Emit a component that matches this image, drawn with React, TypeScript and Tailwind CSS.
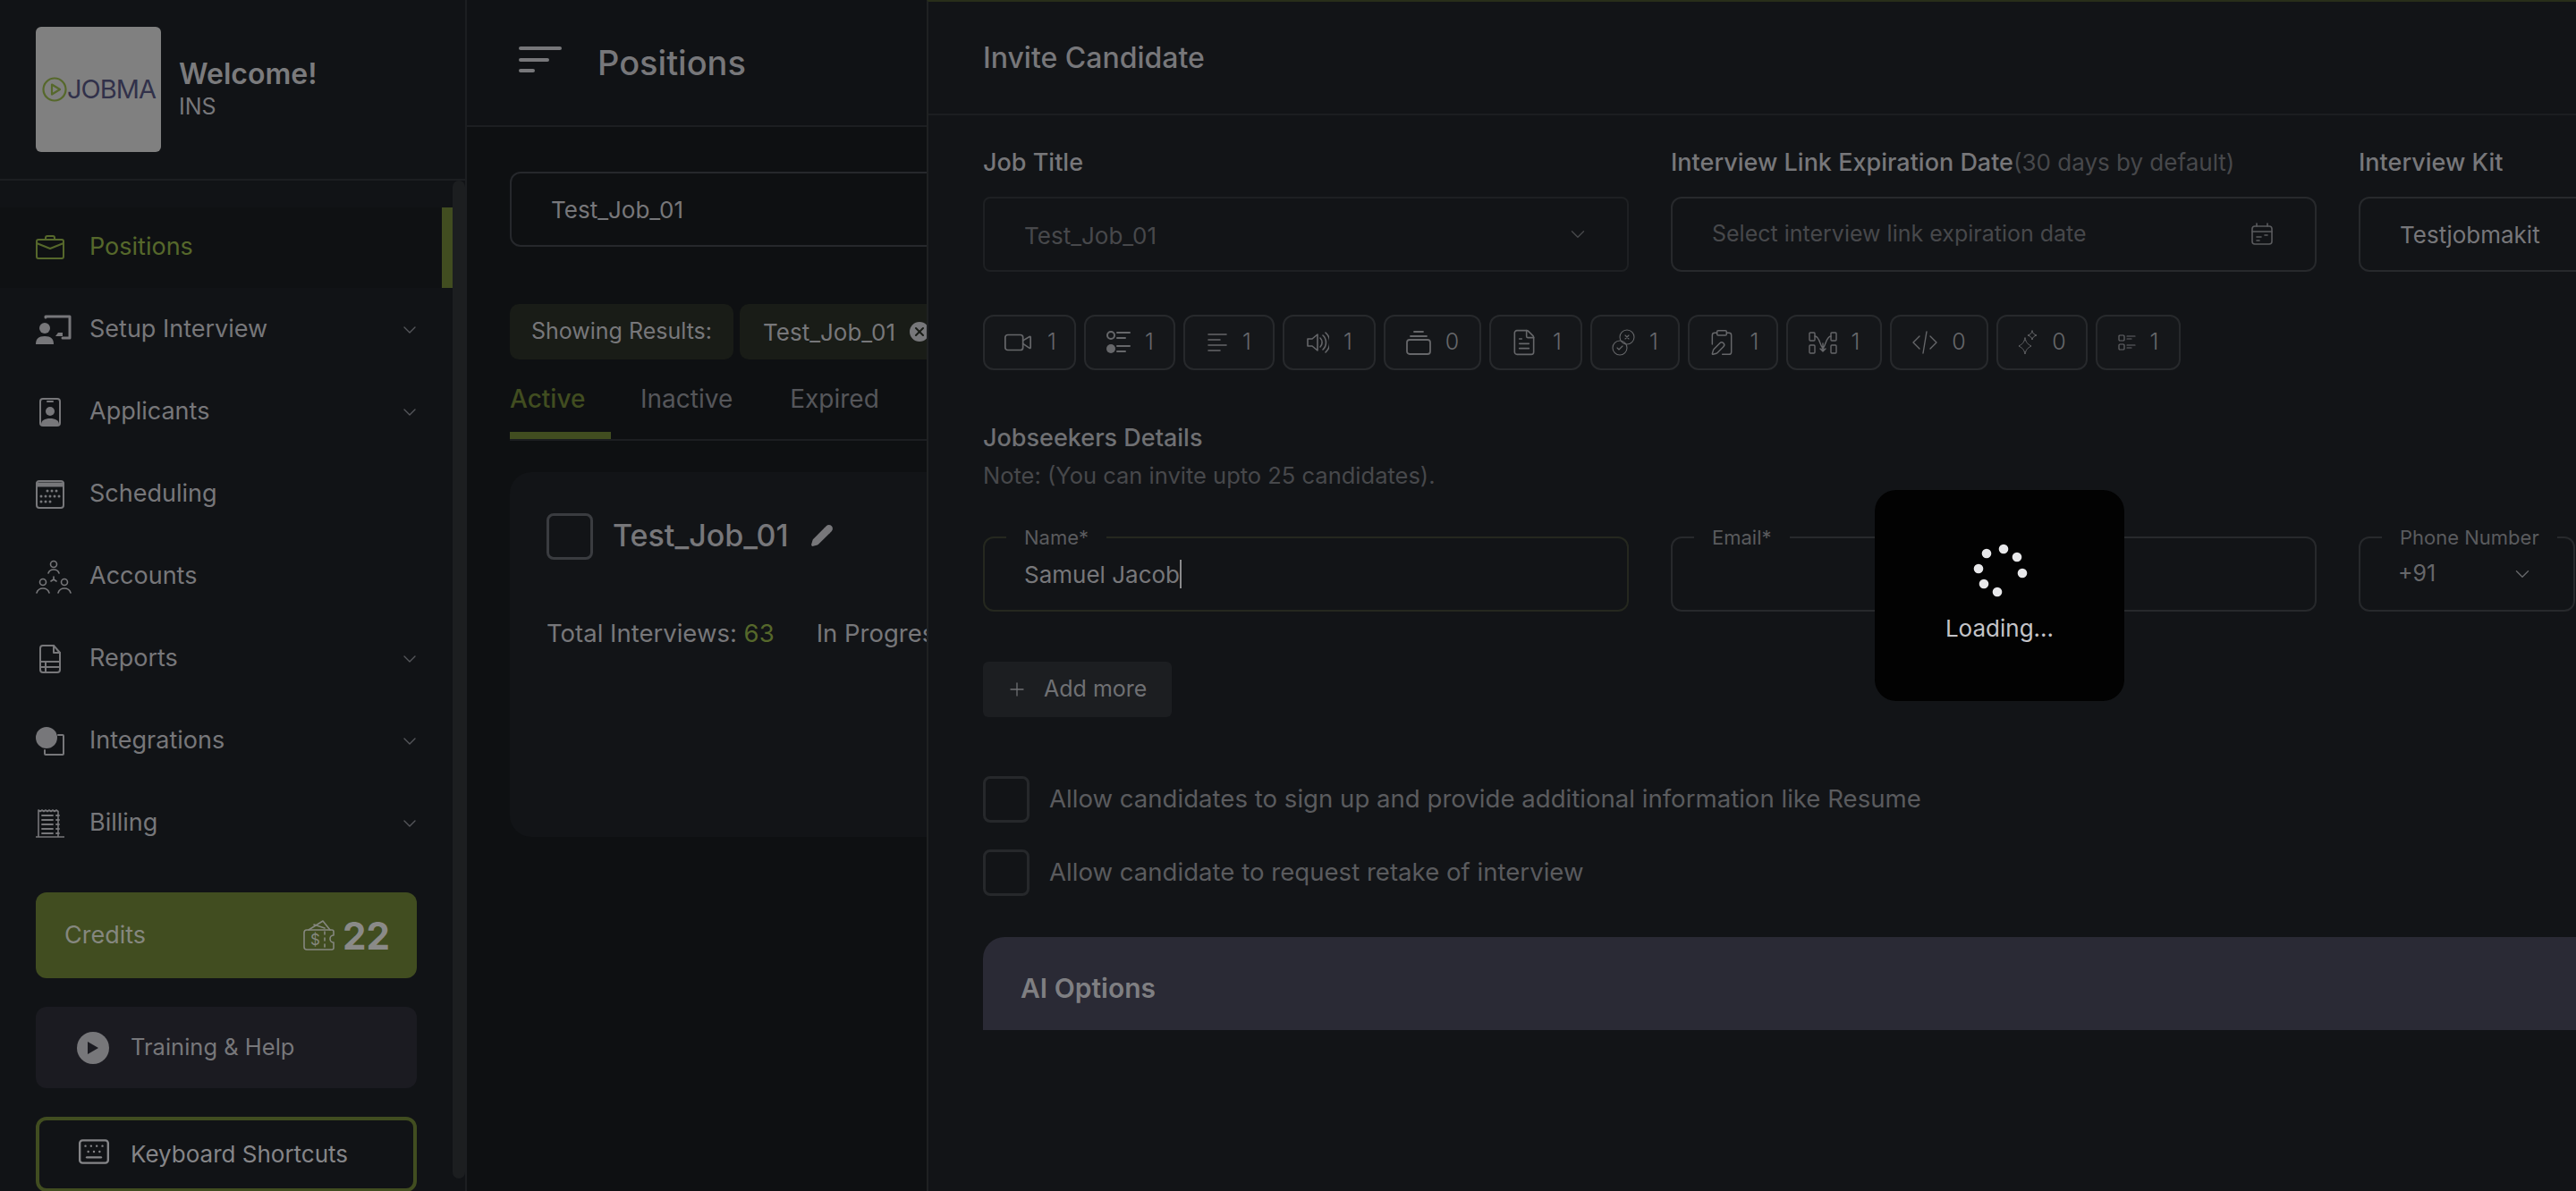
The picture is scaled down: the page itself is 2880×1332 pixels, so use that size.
import { ChevronDown, Plus, Keyboard, Video, FileText, ClipboardPen, Pencil, X } from "lucide-react";
import type { ReactNode } from "react";

const Svg = ({ w, h, vb, children, className }: { w: number; h: number; vb?: string; children: ReactNode; className?: string }) => (
  <svg width={w} height={h} viewBox={vb || `0 0 ${w} ${h}`} fill="none" stroke="currentColor" strokeWidth="2" strokeLinecap="round" strokeLinejoin="round" className={className}>
    {children}
  </svg>
);

const BriefcaseIcon = () => (
  <Svg w={32} h={28}>
    <rect x="1" y="5" width="30" height="21" rx="2" />
    <path d="M11 5V3a2 2 0 0 1 2-2h6a2 2 0 0 1 2 2v2M1 9l15 6 15-6" />
  </Svg>
);
const SetupIcon = () => (
  <Svg w={40} h={34}>
    <path d="M11 3V2h27v24H30" strokeWidth="3" />
    <circle cx="10" cy="15" r="6" fill="currentColor" stroke="none" />
    <path d="M0 33c0-6 3-9 10-9s10 3 10 9z" fill="currentColor" stroke="none" />
    <path d="M22 24h8v-4h-5" fill="currentColor" stroke="none" />
  </Svg>
);
const BadgeIcon = () => (
  <Svg w={24} h={32}>
    <rect x="1" y="1" width="22" height="30" rx="3" />
    <path d="M9 4h6" />
    <circle cx="12" cy="15" r="5" fill="currentColor" stroke="none" />
    <path d="M2 30c0-5 4-7 10-7s10 2 10 7z" fill="currentColor" stroke="none" />
  </Svg>
);
const CalendarIcon = () => (
  <Svg w={32} h={32}>
    <rect x="1" y="1" width="30" height="30" rx="3" />
    <path d="M1 5h30" strokeWidth="5" />
    <g fill="currentColor" stroke="none">
      {[[13, 12], [18, 12], [23, 12], [6, 18], [11, 18], [16, 18], [21, 18], [26, 18], [6, 24], [11, 24], [16, 24]].map(([x, y]) => (
        <circle key={`${x}-${y}`} cx={x} cy={y} r="1.5" />
      ))}
    </g>
  </Svg>
);
const AccountsIcon = () => (
  <Svg w={40} h={38} className="stroke-[1.6]">
    <circle cx="20" cy="5" r="3.5" />
    <path d="M14 15c1-3 3-4 6-4s5 1 6 4M20 19v3M20 22l-3 2M20 22l3 2" />
    <circle cx="8" cy="25" r="3.5" />
    <circle cx="32" cy="25" r="3.5" />
    <path d="M1 37c1-3 3-5 7-5s6 2 7 5M25 37c1-3 3-5 7-5s6 2 7 5" />
  </Svg>
);
const ReportIcon = () => (
  <Svg w={24} h={32}>
    <path d="M4 1h12l7 8v19a3 3 0 0 1-3 3H4a3 3 0 0 1-3-3V4a3 3 0 0 1 3-3z" />
    <path d="M16 1v8h7M1 19h22M1 25h22M7 19v12" />
  </Svg>
);
const IntegrationsIcon = () => (
  <Svg w={32} h={32}>
    <path d="M25 9h5a1 1 0 0 1 1 1v20a1 1 0 0 1-1 1H11a1 1 0 0 1-1-1v-4" />
    <circle cx="12" cy="12" r="12" fill="currentColor" stroke="none" />
  </Svg>
);
const BillingIcon = () => (
  <Svg w={32} h={32} className="stroke-[1.6]">
    <path d="M3 1l2 1.500 2-1.500 2 1.500 2-1.500 2 1.500 2-1.500 2 1.500 2-1.500 2 1.500 2-1.500 2 1.500V30M3 1v29M0 31h32" />
    <path d="M7 7h12M7 12h12M7 17h12M7 22h12M7 27h12M23 7h3M23 12h3M23 17h3M23 22h3M23 27h3" strokeWidth="1.8" />
  </Svg>
);
const WalletIcon = () => (
  <Svg w={36} h={36} className="stroke-[1.6]">
    <path d="M6 12l16-10 8 10" />
    <path d="M12 6l12 4" />
    <path d="M4 12h28a2 2 0 0 1 2 2v4a4 4 0 0 0 0 8v6a2 2 0 0 1-2 2H4a3 3 0 0 1-3-3V15a3 3 0 0 1 3-3z" />
    <path d="M24 14v3M24 21v3M24 28v3" />
    <text x="8" y="29" fontSize="17" fill="currentColor" stroke="none" fontFamily="Inter, sans-serif">$</text>
  </Svg>
);
const ListIcon = () => (
  <Svg w={28} h={28} className="stroke-[2]">
    <circle cx="6" cy="6" r="4" />
    <circle cx="6" cy="21" r="5" fill="currentColor" stroke="none" />
    <path d="M13 3h14M13 9h9M13 18h14M13 24h9" />
  </Svg>
);
const TextLinesIcon = () => (
  <Svg w={24} h={22} className="stroke-[1.6]">
    <path d="M2 2h20M2 8h13M2 14h20M2 20h13" />
  </Svg>
);
const SpeakerIcon = () => (
  <Svg w={26} h={26} className="stroke-[1.6]">
    <path d="M2 9h5l6-5v18l-6-5H2z" />
    <path d="M16 8a7 7 0 0 1 0 10M19 5a11 11 0 0 1 0 16M22 2a15 15 0 0 1 0 22" />
  </Svg>
);
const StackIcon = () => (
  <Svg w={28} h={28} className="stroke-[1.8]">
    <path d="M9 2h10M5 7h18" />
    <rect x="1" y="11" width="26" height="16" rx="3" />
  </Svg>
);
const LinkCheckIcon = () => (
  <Svg w={26} h={30} className="stroke-[1.1]">
    <circle cx="17" cy="9" r="8" />
    <circle cx="9" cy="21" r="8" />
    <path d="M15 7l4 4M19 7l-4 4M6 21l2 2 4-4" />
  </Svg>
);
const FlowIcon = () => (
  <Svg w={32} h={26} className="stroke-[1.4]">
    <rect x="1" y="2" width="6" height="9" rx="1" />
    <rect x="1" y="16" width="6" height="9" rx="1" />
    <rect x="25" y="2" width="6" height="9" rx="1" />
    <rect x="25" y="16" width="6" height="9" rx="1" />
    <path d="M7 6c6 0 6 14 10 14M25 6c-6 0-6 14-10 14M16 14v9M13 20l3 3 3-3" />
  </Svg>
);
const CodeIcon = () => (
  <Svg w={28} h={26} className="stroke-[1.4]">
    <path d="M8 6l-7 7 7 7M20 6l7 7-7 7M16 1l-4 24" />
  </Svg>
);
const SparkleIcon = () => (
  <Svg w={22} h={28} className="stroke-[1]">
    <path d="M8 9c1 5 3 7 7 9-4 2-6 4-7 9-1-5-3-7-7-9 4-2 6-4 7-9z" />
    <path d="M16 1c.5 3 2 4 5 5-3 1-4.500 2-5 5-.5-3-2-4-5-5 3-1 4.500-2 5-5z" />
  </Svg>
);
const ChecklistIcon = () => (
  <Svg w={20} h={20} className="stroke-[1.2]">
    <rect x="1" y="2" width="6" height="6" rx="1" />
    <rect x="1" y="12" width="6" height="6" rx="1" />
    <path d="M10 3h9M10 6h5M10 13h9M10 16h5" />
  </Svg>
);
const CalendarSmall = () => (
  <Svg w={26} h={26} className="stroke-[1.6]">
    <rect x="2" y="4" width="22" height="20" rx="3" />
    <path d="M2 10h22M7 1v3M19 1v3M7 16h5M16 14h3M7 20h3" />
  </Svg>
);

const navItems = [
  { label: "Setup Interview", icon: <SetupIcon />, caret: true },
  { label: "Applicants", icon: <span className="ml-[4px] flex"><BadgeIcon /></span>, caret: true },
  { label: "Scheduling", icon: <CalendarIcon /> },
  { label: "Accounts", icon: <AccountsIcon /> },
  { label: "Reports", icon: <span className="ml-[4px] flex"><ReportIcon /></span>, caret: true },
  { label: "Integrations", icon: <IntegrationsIcon />, caret: true },
  { label: "Billing", icon: <BillingIcon />, caret: true },
];

const inviteChips = [
  { w: "w-[104px]", icon: <Video size={34} strokeWidth={1.2} />, count: 1 },
  { w: "w-[102px]", icon: <ListIcon />, count: 1 },
  { w: "w-[102px]", icon: <TextLinesIcon />, count: 1 },
  { w: "w-[104px]", icon: <SpeakerIcon />, count: 1 },
  { w: "w-[109px]", icon: <StackIcon />, count: 0 },
  { w: "w-[104px]", icon: <FileText size={32} strokeWidth={1.2} />, count: 1 },
  { w: "w-[100px]", icon: <LinkCheckIcon />, count: 1 },
  { w: "w-[101px]", icon: <ClipboardPen size={32} strokeWidth={1.1} />, count: 1 },
  { w: "w-[107px]", icon: <FlowIcon />, count: 1 },
  { w: "w-[110px]", icon: <CodeIcon />, count: 0 },
  { w: "w-[102px]", icon: <SparkleIcon />, count: 0 },
  { w: "w-[95px]", icon: <ChecklistIcon />, count: 1 },
];

const Sidebar = () => (
  <aside className="w-[522px] shrink-0 h-full flex flex-col bg-[#111316] border-r-2 border-[#1c1e21]">
    <div className="h-[202px] shrink-0 flex items-center pl-[40px] gap-[20px] border-b-2 border-[#1c1e21]">
      <div className="w-[140px] h-[140px] rounded-[6px] bg-[#808080] flex items-center pl-[7px]">
        <svg width="28" height="28" viewBox="0 0 28 28" fill="none" stroke="#56682b" strokeWidth="2.200" strokeLinejoin="round">
          <circle cx="14" cy="14" r="12.500" />
          <path d="M11 8.500l9 5.500-9 5.500z" />
        </svg>
        <span className="text-[29px] text-[#31314a] tracking-[-1px] leading-none -mt-[2px]">JOBMA</span>
      </div>
      <div className="flex flex-col -mt-[2px]">
        <span className="text-[32px] leading-[40px] font-semibold text-[#7b7b7d]">Welcome!</span>
        <span className="text-[25px] leading-[32px] text-[#77777a]">INS</span>
      </div>
    </div>
    <div className="flex-1 flex min-h-0">
      <div className="flex-1 min-w-0 flex flex-col">
        <nav className="pt-[30px] flex flex-col gap-[2px]">
          <a className="h-[90px] flex items-center pl-[40px] text-[#56682b] border-r-[12px] border-[#414d20] bg-[#0f1113]">
            <span className="w-[60px] flex"><BriefcaseIcon /></span>
            <span className="text-[27px] -mt-[1px]">Positions</span>
          </a>
          {navItems.map((n) => (
            <a key={n.label} className="h-[90px] flex items-center pl-[40px] pr-[36px] text-[#77777a]">
              <span className="w-[60px] shrink-0 flex">{n.icon}</span>
              <span className="text-[27px] flex-1 -mt-[1px]">{n.label}</span>
              {n.caret && <ChevronDown size={24} strokeWidth={1.4} className="text-[#55565a]" />}
            </a>
          ))}
        </nav>
        <div className="mt-[32px] ml-[40px] mr-[40px] flex flex-col">
          <div className="h-[96px] rounded-[12px] bg-[#414d20] flex items-center pl-[32px] pr-[30px] text-[#85877f]">
            <span className="text-[27px] flex-1">Credits</span>
            <WalletIcon />
            <span className="text-[42px] font-bold text-[#8a8a88] ml-[8px]">22</span>
          </div>
          <div className="mt-[32px] h-[91px] rounded-[12px] bg-[#1b1b21] flex items-center pl-[46px] text-[#77777a]">
            <span className="w-[36px] h-[36px] rounded-full bg-[#77777a] flex items-center justify-center">
              <svg width="14" height="16" viewBox="0 0 14 16"><path d="M1 1l12 7-12 7z" fill="#1b1b21" /></svg>
            </span>
            <span className="text-[25.500px] ml-[24px]">Training &amp; Help</span>
          </div>
          <div className="mt-[32px] h-[84px] rounded-[12px] border-4 border-[#414d20] flex items-center pl-[42px] text-[#858588]">
            <Keyboard size={38} strokeWidth={1.5} className="-mt-[6px]" />
            <span className="text-[26px] ml-[22px] -mt-[1px]">Keyboard Shortcuts</span>
          </div>
        </div>
      </div>
      <div className="w-[14px] shrink-0 mb-[14px] rounded-full bg-[#1c1e20]" />
    </div>
  </aside>
);

const Positions = () => (
  <main className="flex-1 min-w-0 h-full bg-[#0e1012]">
    <header className="h-[142px] bg-[#101215] border-b-2 border-[#1c1e21] flex items-center pl-[58px] text-[#77777a]">
      <svg width="48" height="30" viewBox="0 0 48 30" fill="none" stroke="currentColor" strokeWidth="4" strokeLinecap="round" className="mb-[6px]">
        <path d="M2 2h44M2 15h30M2 27h14" />
      </svg>
      <h1 className="ml-[40px] text-[38px] font-medium">Positions</h1>
    </header>
    <div className="pl-[48px]">
      <div className="mt-[50px] h-[84px] w-[1400px] rounded-[12px] border-2 border-[#26282c] flex items-center pl-[44px] text-[26px] text-[#77777a]">Test_Job_01</div>
      <div className="mt-[64px] flex gap-[7px] text-[25px] text-[#77777a]">
        <span className="h-[62px] w-[250px] rounded-[10px] bg-[#191c17] flex items-center justify-center">Showing Results:</span>
        <span className="h-[62px] w-[260px] rounded-[10px] bg-[#191c17] flex items-center pl-[26px] gap-[16px] text-[26px]">
          Test_Job_01
          <span className="w-[22px] h-[22px] rounded-full bg-[#77777a] flex items-center justify-center"><X size={16} strokeWidth={3} className="text-[#191c17]" /></span>
        </span>
      </div>
      <div className="mt-[14px] flex border-b-2 border-[#1c1e21] w-[1400px] text-[28px] text-[#55565a]">
        <span className="w-[113px] h-[75px] pt-[9px] text-[#414d20] border-b-8 border-[#414d20] font-medium">Active</span>
        <span className="ml-[33px] pt-[9px]">Inactive</span>
        <span className="ml-[64px] pt-[9px]">Expired</span>
      </div>
      <div className="mt-[35px] h-[408px] w-[1400px] rounded-[24px] bg-[#121417] pt-[46px] pl-[41px]">
        <div className="flex items-center">
          <span className="w-[52px] h-[52px] rounded-[8px] border-[3px] border-[#3a3c40]" />
          <span className="ml-[22px] text-[34px] font-medium text-[#77777a] -mt-[4px]">Test_Job_01</span>
          <Pencil size={26} fill="currentColor" className="ml-[24px] text-[#77777a] -mt-[2px]" />
        </div>
        <div className="mt-[62px] flex text-[27.500px] text-[#77777a]">
          <span>Total Interviews: <span className="text-[#56682b]">63</span></span>
          <span className="ml-[47px]">In Progress</span>
        </div>
      </div>
    </div>
  </main>
);

const Label = ({ children }: { children: ReactNode }) => (
  <span className="absolute -top-[14px] left-[24px] px-[20px] bg-[#121417] text-[22px] leading-[26px] text-[#5a5b5e]">{children}</span>
);

const InviteDrawer = () => (
  <section className="absolute top-0 left-[1036px] w-[1844px] h-[1332px] bg-[#121417] border-l-2 border-t-2 border-l-[#1f2122] border-t-[#282e1a] overflow-hidden">
    <div className="h-[127px] flex items-center pl-[61px] border-b-2 border-[#1c1e21]">
      <h2 className="text-[32px] font-medium text-[#77777a]">Invite Candidate</h2>
    </div>
    <div className="h-[1023px] pl-[61px] overflow-hidden">
      <div className="grid grid-cols-[722px_722px_722px] gap-x-[47px] pt-[35px]">
        <div>
          <div className="text-[27px] leading-[36px] font-medium text-[#77777a]">Job Title</div>
          <div className="mt-[20px] h-[84px] rounded-[8px] border-2 border-[#1e2023] flex items-center pl-[44px] pr-[42px] justify-between text-[26px] text-[#47484b]">
            <span className="mt-[2px]">Test_Job_01</span>
            <ChevronDown size={26} strokeWidth={1.3} />
          </div>
        </div>
        <div>
          <div className="text-[27px] leading-[36px] font-medium text-[#77777a] whitespace-nowrap">
            Interview Link Expiration Date<span className="font-normal text-[26px] text-[#47484b]">(30 days by default)</span>
          </div>
          <div className="mt-[20px] h-[84px] rounded-[12px] border-2 border-[#27292c] flex items-center pl-[44px] pr-[46px] justify-between text-[25px] text-[#47484b]">
            <span>Select interview link expiration date</span>
            <span className="text-[#5a5b5e]"><CalendarSmall /></span>
          </div>
        </div>
        <div>
          <div className="text-[27px] leading-[36px] font-medium text-[#77777a]">Interview Kit</div>
          <div className="mt-[20px] h-[84px] rounded-[12px] border-2 border-[#27292c] flex items-center pl-[44px] text-[26px] text-[#77777a]">Testjobmakit</div>
        </div>
      </div>
      <div className="mt-[48px] flex gap-[9px]">
        {inviteChips.map((c, i) => (
          <div key={i} className={`${c.w} h-[62px] rounded-[12px] border-2 border-[#27292c] bg-[#15171a] flex items-center justify-center gap-[16px] text-[#66676a]`}>
            {c.icon}
            <span className="text-[25px] font-light">{c.count}</span>
          </div>
        ))}
      </div>
      <div className="mt-[57px] text-[27px] leading-[38px] font-medium text-[#6f7073]">Jobseekers Details</div>
      <div className="text-[25.500px] leading-[40px] text-[#47484b] mt-[3px]">Note: (You can invite upto 25 candidates).</div>
      <div className="mt-[48px] grid grid-cols-[722px_722px_242px] gap-x-[47px]">
        <div className="relative h-[84px] rounded-[12px] border-2 border-[#25281f] flex items-center pl-[44px] text-[26px] text-[#77777a]">
          <Label>Name*</Label>
          Samuel Jacob<span className="w-[2px] h-[32px] bg-[#8a8a8c]" />
        </div>
        <div className="relative h-[84px] rounded-[12px] border-2 border-[#27292c]">
          <Label>Email*</Label>
        </div>
        <div className="relative h-[84px] rounded-[12px] border-2 border-[#27292c] flex items-center pl-[42px] pr-[44px] justify-between text-[25px] text-[#66676a]">
          <Label>Phone Number</Label>
          +91
          <ChevronDown size={26} strokeWidth={1.3} />
        </div>
      </div>
      <div className="mt-[56px] w-[211px] h-[62px] rounded-[6px] bg-[#1c1e21] flex items-center pl-[26px] gap-[18px] text-[#6f7073]">
        <Plus size={24} strokeWidth={1.3} />
        <span className="text-[25px]">Add more</span>
      </div>
      <div className="mt-[66px] flex items-center gap-[22px]">
        <span className="w-[52px] h-[52px] rounded-[8px] border-[3px] border-[#26282b]" />
        <span className="text-[27.600px] text-[#5a5b5e]">Allow candidates to sign up and provide additional information like Resume</span>
      </div>
      <div className="mt-[30px] flex items-center gap-[22px]">
        <span className="w-[52px] h-[52px] rounded-[8px] border-[3px] border-[#26282b]" />
        <span className="text-[27.600px] text-[#5a5b5e]">Allow candidate to request retake of interview</span>
      </div>
      <div className="mt-[46px] h-[110px] -mr-[40px] rounded-t-[24px] bg-[#2a2a35] pl-[42px] pt-[35px] text-[30px] font-semibold text-[#7f7f82]">AI Options</div>
    </div>
  </section>
);

const LoadingBox = () => (
  <div className="absolute left-[2096px] top-[548px] w-[279px] h-[236px] rounded-[24px] bg-[#020202] flex flex-col items-center pt-[54px]">
    <svg width="70" height="70" viewBox="0 0 70 70" fill="#e8e8ea">
      {[[39, 12], [54, 21], [60, 39], [32, 60], [17, 51], [11, 34], [20, 17]].map(([cx, cy]) => (
        <circle key={cx} cx={cx} cy={cy} r="5.300" />
      ))}
    </svg>
    <span className="mt-[11px] text-[26px] text-[#c4c4c8]">Loading...</span>
  </div>
);

export default function App() {
  return (
    <div className="relative w-[2880px] h-[1332px] overflow-hidden flex font-['Inter',sans-serif] bg-[#0e1012]">
      <Sidebar />
      <Positions />
      <InviteDrawer />
      <LoadingBox />
    </div>
  );
}
